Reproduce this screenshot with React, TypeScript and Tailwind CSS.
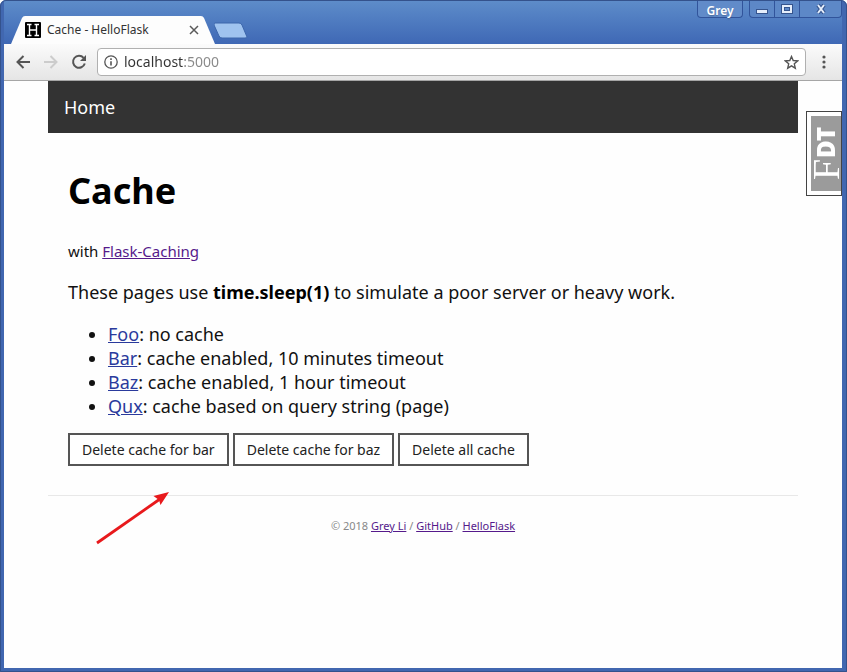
import type { ReactNode } from "react";

function Tab() {
  return (
    <div className="relative h-7 w-[208px]">
      <svg className="absolute inset-0" width="208" height="28" viewBox="0 0 208 28" aria-hidden="true">
        <path d="M0 28 L11 2 Q12 0 14 0 H190 Q192 0 193 2 L204 28 Z" fill="#fdfdfd" />
      </svg>
      <div className="relative flex h-7 items-center pr-4 pl-[14px]">
        <svg width="16" height="16" viewBox="0 0 16 16" aria-hidden="true">
          <rect width="16" height="16" rx="1" fill="#000" />
          <path d="M2 2.5H6.5M2 13.5H6.5M9.5 2.5H14M9.5 13.5H14M4.5 2.5V13.5M11.5 2.5V13.5M4.5 8H11.5" stroke="#fff" strokeWidth="1.4" fill="none" />
        </svg>
        <span className="ml-[6px] flex-1 text-[12px] leading-4 text-[#333]">Cache - HelloFlask</span>
        <button aria-label="Close tab" className="mr-[4px]">
          <svg width="10" height="10" viewBox="0 0 10 10" stroke="#5a5a5a" strokeWidth="1.5" aria-hidden="true">
            <path d="M1 1L9 9M9 1L1 9" />
          </svg>
        </button>
      </div>
    </div>
  );
}

function TitleBar() {
  const control = "flex h-full items-center justify-center border-r border-[#31549b]";
  return (
    <header className="flex h-[44px] items-start justify-between bg-linear-to-b from-[#5e8dca] to-[#3f68b5] pl-[7px]">
      <div className="flex pt-4">
        <Tab />
        <button aria-label="New tab" className="-ml-[5px] mt-[6px] h-[18px]">
          <svg width="34" height="18" viewBox="0 0 34 18" aria-hidden="true">
            <path d="M1 1H25Q27 1 28 3L33 15Q33 16 31 16H8Q6 16 5 14L0 3Q0 1 1 1Z" fill="#9fc3ef" stroke="#3c66ab" strokeWidth="1" />
          </svg>
        </button>
      </div>
      <div className="flex gap-[6px]">
        <button className="flex h-[18px] w-[46px] items-center justify-center rounded-b border border-t-0 border-[#31549b] bg-[#618bc9] pt-1 text-[12px] leading-4 font-semibold text-white text-shadow-sm">
          Grey
        </button>
        <div className="flex h-[18px] overflow-hidden rounded-b border border-t-0 border-[#31549b] bg-[#5d88c7]">
          <button aria-label="Minimize" className={control + " w-[25px]"}>
            <svg width="14" height="14" viewBox="0 0 14 14" aria-hidden="true">
              <rect x="1.5" y="7.5" width="11" height="4" fill="#e5eefb" stroke="#36558e" />
            </svg>
          </button>
          <button aria-label="Maximize" className={control + " w-[25px]"}>
            <svg width="14" height="14" viewBox="0 0 14 14" fill="none" aria-hidden="true">
              <rect x="3" y="4" width="8" height="6" stroke="#36558e" strokeWidth="4" />
              <rect x="3" y="4" width="8" height="6" stroke="#e5eefb" strokeWidth="2" />
            </svg>
          </button>
          <button aria-label="Close window" className="flex h-full w-[41px] items-center justify-center">
            <svg width="14" height="14" viewBox="0 0 14 14" fill="none" aria-hidden="true">
              <path d="M4 3L10 11M10 3L4 11" stroke="#36558e" strokeWidth="4" />
              <path d="M4 3L10 11M10 3L4 11" stroke="#e5eefb" strokeWidth="2" />
            </svg>
          </button>
        </div>
      </div>
    </header>
  );
}

function Toolbar() {
  return (
    <div className="flex h-[37px] items-center border-b border-[#a6a6a6] bg-linear-to-b from-[#fbfbfb] to-[#e5e5e5] pr-[15px] pl-3">
      <button aria-label="Back">
        <svg width="14" height="14" viewBox="0 0 14 14" fill="none" stroke="#555" strokeWidth="2" aria-hidden="true">
          <path d="M14 7H1.5M7.500 1L1.500 7L7.500 13" />
        </svg>
      </button>
      <button aria-label="Forward" className="ml-[14px]">
        <svg width="14" height="14" viewBox="0 0 14 14" fill="none" stroke="#ccc" strokeWidth="2" aria-hidden="true">
          <path d="M0 7H12.500M6.500 1L12.500 7L6.500 13" />
        </svg>
      </button>
      <button aria-label="Reload" className="ml-[13px]">
        <svg width="16" height="16" viewBox="0 0 16 16" fill="none" aria-hidden="true">
          <path d="M12.600 3.800A6 6 0 1 0 13.800 9.500" stroke="#555" strokeWidth="2" />
          <path d="M15 1V7H9Z" fill="#555" />
        </svg>
      </button>
      <div className="ml-[10px] flex h-[28px] flex-1 items-center rounded-sm border border-[#b0b0b0] bg-white px-[6px]">
        <svg width="14" height="14" viewBox="0 0 14 14" fill="none" stroke="#555" aria-hidden="true">
          <circle cx="7" cy="7" r="6.200" strokeWidth="1.300" />
          <path d="M7 6.200V10.500M7 3.300V5" strokeWidth="1.600" />
        </svg>
        <input
          type="text"
          aria-label="Address"
          defaultValue="localhost:5000"
          className="ml-[6px] min-w-0 flex-1 bg-linear-to-r from-[#333] from-[60px] to-[#888] to-[60px] bg-clip-text text-[14px] leading-5 text-transparent outline-none"
        />
        <button aria-label="Bookmark this page">
          <svg width="15" height="15" viewBox="0 0 15 15" fill="none" stroke="#555" strokeWidth="1.400" aria-hidden="true">
            <path d="M7.500 1.500L9.200 5.500L13.700 5.900L10.300 8.800L11.300 13.200L7.500 10.900L3.700 13.200L4.700 8.800L1.300 5.900L5.800 5.500Z" />
          </svg>
        </button>
      </div>
      <button aria-label="Menu" className="ml-[15px]">
        <svg width="6" height="14" viewBox="0 0 6 14" fill="#555" aria-hidden="true">
          <circle cx="3" cy="2" r="1.600" />
          <circle cx="3" cy="7" r="1.600" />
          <circle cx="3" cy="12" r="1.600" />
        </svg>
      </button>
    </div>
  );
}

function VisitedLink({ children }: { children: ReactNode }) {
  return <a href="#visited" className="text-[#551a8b] underline">{children}</a>;
}

const pages = [
  { name: "Foo", note: "no cache" },
  { name: "Bar", note: "cache enabled, 10 minutes timeout" },
  { name: "Baz", note: "cache enabled, 1 hour timeout" },
  { name: "Qux", note: "cache based on query string (page)" },
];

const actions = ["Delete cache for bar", "Delete cache for baz", "Delete all cache"];

export default function App() {
  return (
    <div className="flex min-h-screen flex-col rounded-t-md border-4 border-t-2 border-r-[5px] border-[#4167b0] bg-[#fefefe] font-['Noto_Sans','Open_Sans',sans-serif] text-[#111] outline-1 -outline-offset-1 outline-[#34528c]">
      <div className="-mt-[2px]">
        <TitleBar />
        <Toolbar />
      </div>
      <div className="relative flex-1">
        <div className="mx-auto max-w-[750px]">
          <nav className="flex h-[52px] items-center bg-[#333] px-4">
            <a href="#home" className="text-[18px] leading-6 text-white">Home</a>
          </nav>
          <main className="px-5 pt-8">
            <h1 className="text-[36px] leading-[52px] font-bold text-black">Cache</h1>
            <p className="mt-[22px] text-[15px] leading-6">
              with <VisitedLink>Flask-Caching</VisitedLink>
            </p>
            <p className="mt-[17px] text-[18px] leading-6">
              These pages use <strong className="text-black">time.sleep(1)</strong> to simulate a poor server or heavy work.
            </p>
            <ul className="mt-[18px] list-disc pl-10 text-[18px] leading-6">
              {pages.map((page) => (
                <li key={page.name}>
                  <a href="#page" className="text-[#2a3a9c] underline">{page.name}</a>: {page.note}
                </li>
              ))}
            </ul>
            <div className="mt-[15px] flex gap-1">
              {actions.map((label) => (
                <button key={label} className="h-[33px] border-2 border-[#555] bg-white px-3 text-[14px] leading-5 whitespace-nowrap text-[#222]">
                  {label}
                </button>
              ))}
            </div>
          </main>
          <footer className="mt-[29px] border-t border-[#e8e8e8] pt-[22px] text-center text-[11px] leading-4 text-[#888]">
            © 2018 <VisitedLink>Grey Li</VisitedLink> / <VisitedLink>GitHub</VisitedLink> / <VisitedLink>HelloFlask</VisitedLink>
          </footer>
        </div>
        <button aria-label="Show toolbar" className="absolute top-[30px] right-0 h-[85px] w-9 border border-[#444] bg-white pt-1 pb-1 pl-1">
          <span className="flex h-full w-full rotate-180 items-center justify-center bg-[#9b9b9b] text-white [writing-mode:vertical-rl]">
            <span className="font-['Liberation_Serif',serif] text-[38px] leading-8">F</span>
            <span className="text-[24px] leading-8 font-black">DT</span>
          </span>
        </button>
        <svg className="absolute top-[407px] left-[90px]" width="80" height="60" viewBox="0 0 80 60" aria-hidden="true">
          <path d="M3 55L66 11" stroke="#e8191c" strokeWidth="2.800" />
          <path d="M75 4L66.500 17L65 12L59.500 8Z" fill="#e8191c" />
        </svg>
      </div>
    </div>
  );
}
